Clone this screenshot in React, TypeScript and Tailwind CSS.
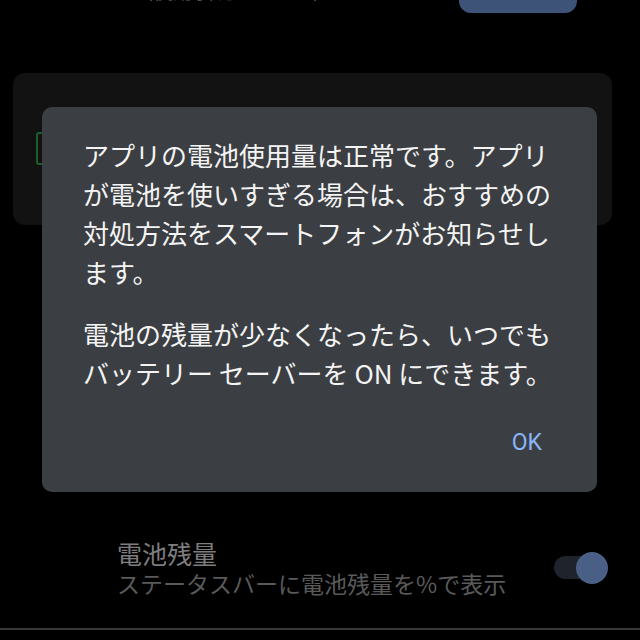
const jp = { fontFamily: '"Noto Sans CJK JP", "Noto Sans", sans-serif' };

function Toggle() {
  return (
    <div className="relative h-[32px] w-[54px]">
      <div className="absolute left-0 top-[4px] h-[23px] w-[46px] rounded-full bg-[#1e232c]" />
      <div className="absolute right-0 top-0 h-[32px] w-[32px] rounded-full bg-[#4a5f86]" />
    </div>
  );
}

function BatteryDialog() {
  return (
    <div
      className="absolute left-[42px] top-[107px] flex h-[385px] w-[555px] flex-col rounded-[10px] bg-[#3b3e42] pl-[41px] pt-[28px] text-[26px] leading-[39px] text-[#f4f4f4]"
      style={jp}
    >
      <p className="whitespace-nowrap">
        アプリの電池使用量は正常です。アプリ
        <br />
        が電池を使いすぎる場合は、おすすめの
        <br />
        対処方法をスマートフォンがお知らせし
        <br />
        ます。
      </p>
      <p className="mt-[23px] whitespace-nowrap">
        電池の残量が少なくなったら、いつでも
        <br />
        バッテリー セーバーを ON にできます。
      </p>
      <div className="mt-[37px] flex justify-end pr-[55px]">
        <span
          className="text-[23px] leading-[28px] text-[#8ab4f8]"
          style={{ fontFamily: "Roboto, sans-serif" }}
        >
          OK
        </span>
      </div>
    </div>
  );
}

export default function App() {
  return (
    <div className="relative h-[640px] w-[640px] overflow-hidden bg-black" style={jp}>
      <div className="-mt-[36px] flex h-[49px] items-start">
        <span className="ml-[133px] mt-[15px] text-[20px] leading-[24px] text-[#6e6e6e]">
          （使用状況に基づく）
        </span>
        <div className="ml-auto mr-[63px] h-[49px] w-[118px] rounded-[12px] bg-[#3e5378]" />
      </div>

      <div className="relative mx-[13px] mt-[60px] h-[152px] w-[599px] rounded-[12px] bg-[#121212]">
        <div className="absolute left-[23px] top-[59px] h-[33px] w-[16px] rounded-[3px] border-2 border-[#1f5c2c]" />
        <p className="pl-[140px] pt-[28px] text-[22px] leading-[30px] text-[#5e5e5e]">
          アプリの電池使用量は正常です
        </p>
      </div>

      <div className="mt-[313px] flex items-center pl-[117px] pr-[32px]">
        <div className="flex flex-col">
          <span className="text-[25px] leading-[31px] text-[#7d7d7d]">電池残量</span>
          <span className="text-[23px] leading-[29px] text-[#5a5a5a]">
            ステータスバーに電池残量を%で表示
          </span>
        </div>
        <div className="ml-auto">
          <Toggle />
        </div>
      </div>

      <div className="mt-[30px] h-[2px] w-full bg-[#383838]" />

      <BatteryDialog />
    </div>
  );
}
